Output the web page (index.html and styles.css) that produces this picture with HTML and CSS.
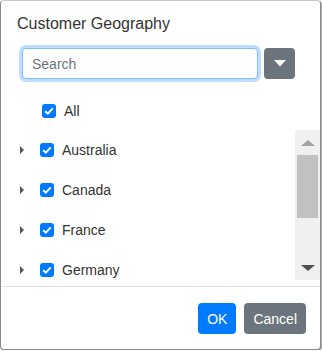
FILE: index.html
```html
<!DOCTYPE html>
<html>
<head>
    <title>Customer Geography</title>
    <link rel="stylesheet" href="styles.css">
</head>
<body>

<div class="dialog">
    <h3 class="title">Customer Geography</h3>

    <div class="search-row">
        <input type="text" class="search focused" placeholder="Search">
        <button class="drop-btn">
            <svg width="12" height="7" viewBox="0 0 12 7"><path d="M0 0 L12 0 L6 6.5 Z" fill="#fff"/></svg>
        </button>
    </div>

    <div class="all-row">
        <span class="check">
            <svg width="10" height="8" viewBox="0 0 10 8"><path d="M1.2 4.2 L3.8 6.6 L8.8 1.4" fill="none" stroke="#fff" stroke-width="2"/></svg>
        </span>
        <span class="label">All</span>
    </div>

    <div class="list-wrap">
        <div class="tree">
            <div class="item">
                <span class="arrow"></span>
                <span class="check">
                    <svg width="10" height="8" viewBox="0 0 10 8"><path d="M1.2 4.2 L3.8 6.6 L8.8 1.4" fill="none" stroke="#fff" stroke-width="2"/></svg>
                </span>
                <span class="label">Australia</span>
            </div>
            <div class="item">
                <span class="arrow"></span>
                <span class="check">
                    <svg width="10" height="8" viewBox="0 0 10 8"><path d="M1.2 4.2 L3.8 6.6 L8.8 1.4" fill="none" stroke="#fff" stroke-width="2"/></svg>
                </span>
                <span class="label">Canada</span>
            </div>
            <div class="item">
                <span class="arrow"></span>
                <span class="check">
                    <svg width="10" height="8" viewBox="0 0 10 8"><path d="M1.2 4.2 L3.8 6.6 L8.8 1.4" fill="none" stroke="#fff" stroke-width="2"/></svg>
                </span>
                <span class="label">France</span>
            </div>
            <div class="item">
                <span class="arrow"></span>
                <span class="check">
                    <svg width="10" height="8" viewBox="0 0 10 8"><path d="M1.2 4.2 L3.8 6.6 L8.8 1.4" fill="none" stroke="#fff" stroke-width="2"/></svg>
                </span>
                <span class="label">Germany</span>
            </div>
        </div>
        <div class="scrollbar">
            <div class="sb-btn"><span class="sb-up"></span></div>
            <div class="sb-thumb"></div>
            <div class="sb-space"></div>
            <div class="sb-btn"><span class="sb-down"></span></div>
        </div>
    </div>

    <div class="footer">
        <button class="btn btn-primary">OK</button>
        <button class="btn btn-secondary">Cancel</button>
    </div>
</div>

</body>
</html>
```

FILE: styles.css
```css
body {
    margin: 0;
    padding: 0;
    background-color: #fff;
    font-family: "Liberation Sans", Arial, sans-serif;
    color: #333;
}

.dialog {
    width: 321px;
    height: 350px;
    box-sizing: border-box;
    border: 1px solid #8a8a8a;
    border-top-color: #c8c8c8;
    border-radius: 4px;
    background-color: #fff;
    box-shadow: 1px 1px 1px rgba(0, 0, 0, 0.35);
}

.title {
    margin: 0;
    padding: 13px 16px 0;
    font-size: 16px;
    font-weight: normal;
    line-height: 20px;
    color: #333;
}

.search-row {
    display: flex;
    gap: 6px;
    margin-top: 14px;
    padding-left: 21px;
}

.search {
    width: 236px;
    height: 31px;
    box-sizing: border-box;
    padding: 4px 9px;
    font-family: "Liberation Sans", Arial, sans-serif;
    font-size: 14px;
    color: #495057;
    border: 1px solid #ced4da;
    border-radius: 4px;
    outline: none;
}

.search.focused {
    border-color: #80bdff;
    box-shadow: 0 0 0 3px rgba(0, 123, 255, 0.25);
}

.search::placeholder {
    color: #6c757d;
}

.drop-btn {
    width: 31px;
    height: 31px;
    padding: 0;
    border: none;
    border-radius: 4px;
    background-color: #6c757d;
    display: flex;
    align-items: center;
    justify-content: center;
}

.all-row {
    display: flex;
    align-items: center;
    height: 39px;
    margin-top: 12px;
    padding-left: 41px;
}

.check {
    width: 14px;
    height: 14px;
    border-radius: 3px;
    background-color: #007bff;
    display: flex;
    align-items: center;
    justify-content: center;
    flex-shrink: 0;
}

.label {
    margin-left: 8px;
    font-size: 14px;
}

.list-wrap {
    display: flex;
    height: 150px;
}

.tree {
    flex: 1;
    overflow: hidden;
}

.item {
    display: flex;
    align-items: center;
    height: 40px;
    padding-left: 19px;
}

.arrow {
    width: 0;
    height: 0;
    border-top: 4px solid transparent;
    border-bottom: 4px solid transparent;
    border-left: 4px solid #555;
    margin-right: 16px;
}

.scrollbar {
    width: 25px;
    background-color: #f0f0f0;
    display: flex;
    flex-direction: column;
}

.sb-btn {
    height: 25px;
    display: flex;
    align-items: center;
    justify-content: center;
}

.sb-up {
    width: 0;
    height: 0;
    border-left: 7px solid transparent;
    border-right: 7px solid transparent;
    border-bottom: 6px solid #a3a3a3;
}

.sb-down {
    width: 0;
    height: 0;
    border-left: 7px solid transparent;
    border-right: 7px solid transparent;
    border-top: 6px solid #505050;
}

.sb-thumb {
    height: 63px;
    margin: 0 2px;
    background-color: #c1c1c1;
}

.sb-space {
    flex: 1;
}

.footer {
    margin-top: 6px;
    border-top: 1px solid #dee2e6;
    padding: 16px 14px 0;
    display: flex;
    justify-content: flex-end;
    gap: 8px;
}

.btn {
    height: 31px;
    padding: 0 9px;
    border: none;
    border-radius: 4px;
    color: #fff;
    font-family: "Liberation Sans", Arial, sans-serif;
    font-size: 14px;
}

.btn-primary {
    background-color: #007bff;
}

.btn-secondary {
    background-color: #6c757d;
}
```
